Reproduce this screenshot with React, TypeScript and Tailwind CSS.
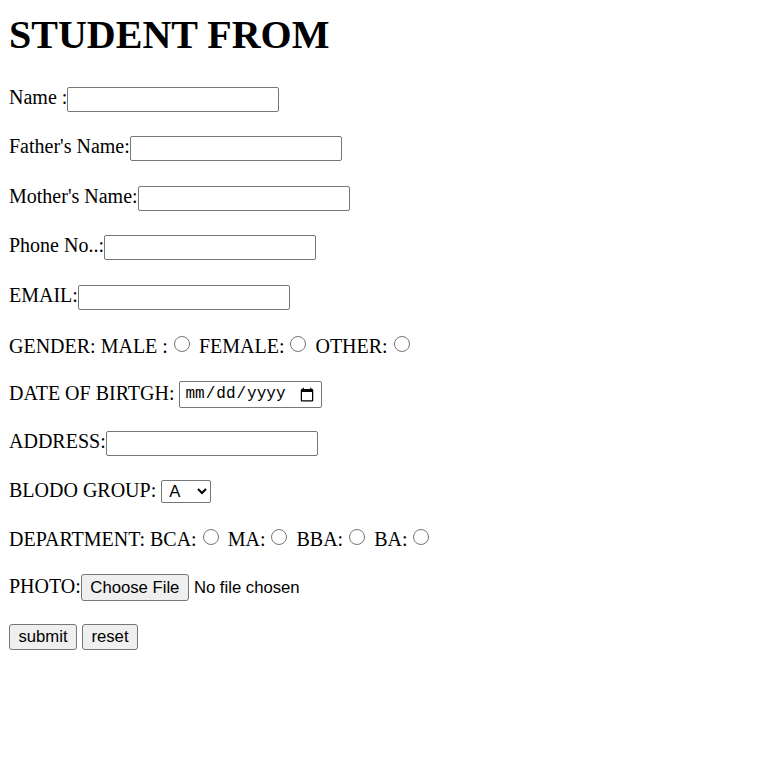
const serif = "font-['Liberation_Serif','Times_New_Roman',serif] text-[20px] text-black";

const textInput =
  "inline-block align-baseline w-[212px] h-[25px] border border-[#767676] rounded-[2px] bg-white px-[2px] text-[16.7px] font-['Liberation_Sans',Arial,sans-serif] outline-none";

const btn =
  "inline-block align-baseline bg-[#efefef] border border-[#767676] rounded-[3px] text-[16.7px] leading-[20px] text-black font-['Liberation_Sans',Arial,sans-serif]";

const radio = "inline-block align-[1px] w-[16px] h-[16px] ml-[6px] mr-[4px] accent-[#767676]";

function TextRow({ label, mt }: { label: string; mt: string }) {
  return (
    <div className={`${mt} h-[25px] leading-[23px] whitespace-nowrap`}>
      {label}
      <input type="text" className={textInput} />
    </div>
  );
}

export default function App() {
  return (
    <div className={`${serif} min-h-screen bg-white pt-[12px] pl-[9px]`}>
      <h1 className="h-[46px] leading-[46px] text-[40px] font-bold">STUDENT FROM</h1>

      <form onSubmit={(e) => e.preventDefault()}>
        <TextRow label="Name :" mt="mt-[28px]" />
        <TextRow label="Father's Name:" mt="mt-[24px]" />
        <TextRow label="Mother's Name:" mt="mt-[25px]" />
        <TextRow label="Phone No..:" mt="mt-[24px]" />
        <TextRow label="EMAIL:" mt="mt-[25px]" />

        <div className="mt-[26px] h-[23px] leading-[23px] whitespace-nowrap">
          GENDER: MALE :<input type="radio" name="gender" className={radio} /> FEMALE:
          <input type="radio" name="gender" className={radio} /> OTHER:
          <input type="radio" name="gender" className={radio} />
        </div>

        <div className="mt-[23px] h-[27px] leading-[23px] whitespace-nowrap">
          DATE OF BIRTGH:{" "}
          <input
            type="date"
            className="inline-block align-[2px] w-[143px] h-[27px] border border-[#767676] rounded-[2px] bg-white px-[4px] text-[16px] font-['Liberation_Mono',monospace]"
          />
        </div>

        <TextRow label="ADDRESS:" mt="mt-[22px]" />

        <div className="mt-[24px] h-[23px] leading-[23px] whitespace-nowrap">
          BLODO GROUP:{" "}
          <select className="inline-block align-baseline w-[50px] h-[23px] border border-[#767676] rounded-[2px] bg-white pl-[3px] text-[16.7px] font-['Liberation_Sans',Arial,sans-serif]">
            <option>A</option>
            <option>B</option>
            <option>AB</option>
            <option>O</option>
          </select>
        </div>

        <div className="mt-[26px] h-[23px] leading-[23px] whitespace-nowrap">
          DEPARTMENT: BCA:<input type="radio" name="dept" className={radio} /> MA:
          <input type="radio" name="dept" className={radio} /> BBA:
          <input type="radio" name="dept" className={radio} /> BA:
          <input type="radio" name="dept" className={radio} />
        </div>

        <div className="mt-[23px] h-[27px] leading-[23px] whitespace-nowrap">
          PHOTO:
          <label className={`${btn} w-[108px] h-[27px] text-center pt-[3px] cursor-default`}>
            Choose File
            <input type="file" className="hidden" />
          </label>
          <span className="ml-[5px] text-[16.7px] font-['Liberation_Sans',Arial,sans-serif]">No file chosen</span>
        </div>

        <div className="mt-[23px] h-[26px] leading-[23px] whitespace-nowrap">
          <button type="submit" className={`${btn} w-[68px] h-[26px]`}>
            submit
          </button>{" "}
          <button type="reset" className={`${btn} w-[56px] h-[26px]`}>
            reset
          </button>
        </div>
      </form>
    </div>
  );
}
